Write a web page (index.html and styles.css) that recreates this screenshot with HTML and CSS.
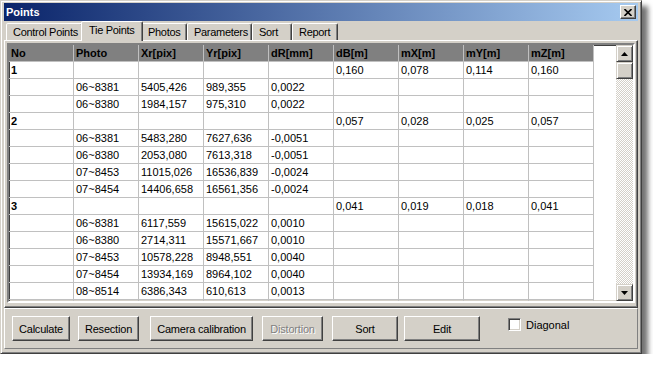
FILE: index.html
```html
<!DOCTYPE html>
<html>
<head>
<meta charset="utf-8">
<link rel="stylesheet" href="styles.css">
</head>
<body>
<div class="window">
  <div class="titlebar">
    <span class="title">Points</span>
    <div class="close"><svg width="8" height="7" viewBox="0 0 8 7"><path d="M0.5 0 L7.5 7 M7.5 0 L0.5 7" stroke="#000" stroke-width="1.6"/></svg></div>
  </div>
  <div class="tabs">
    <div class="tab w-cp">Control Points</div>
    <div class="tab active w-tp">Tie Points</div>
    <div class="tab w-ph">Photos</div>
    <div class="tab w-pa">Parameters</div>
    <div class="tab w-so">Sort</div>
    <div class="tab w-re">Report</div>
  </div>
  <div class="panel">
    <div class="listbox">
      <div class="grid">
        <div class="row head"><div class="cell">No</div><div class="cell">Photo</div><div class="cell">Xr[pix]</div><div class="cell">Yr[pix]</div><div class="cell">dR[mm]</div><div class="cell">dB[m]</div><div class="cell">mX[m]</div><div class="cell">mY[m]</div><div class="cell">mZ[m]</div></div>
        <div class="row"><div class="cell b">1</div><div class="cell"></div><div class="cell"></div><div class="cell"></div><div class="cell"></div><div class="cell">0,160</div><div class="cell">0,078</div><div class="cell">0,114</div><div class="cell">0,160</div></div>
        <div class="row"><div class="cell"></div><div class="cell">06~8381</div><div class="cell">5405,426</div><div class="cell">989,355</div><div class="cell">0,0022</div><div class="cell"></div><div class="cell"></div><div class="cell"></div><div class="cell"></div></div>
        <div class="row"><div class="cell"></div><div class="cell">06~8380</div><div class="cell">1984,157</div><div class="cell">975,310</div><div class="cell">0,0022</div><div class="cell"></div><div class="cell"></div><div class="cell"></div><div class="cell"></div></div>
        <div class="row"><div class="cell b">2</div><div class="cell"></div><div class="cell"></div><div class="cell"></div><div class="cell"></div><div class="cell">0,057</div><div class="cell">0,028</div><div class="cell">0,025</div><div class="cell">0,057</div></div>
        <div class="row"><div class="cell"></div><div class="cell">06~8381</div><div class="cell">5483,280</div><div class="cell">7627,636</div><div class="cell">-0,0051</div><div class="cell"></div><div class="cell"></div><div class="cell"></div><div class="cell"></div></div>
        <div class="row"><div class="cell"></div><div class="cell">06~8380</div><div class="cell">2053,080</div><div class="cell">7613,318</div><div class="cell">-0,0051</div><div class="cell"></div><div class="cell"></div><div class="cell"></div><div class="cell"></div></div>
        <div class="row"><div class="cell"></div><div class="cell">07~8453</div><div class="cell">11015,026</div><div class="cell">16536,839</div><div class="cell">-0,0024</div><div class="cell"></div><div class="cell"></div><div class="cell"></div><div class="cell"></div></div>
        <div class="row"><div class="cell"></div><div class="cell">07~8454</div><div class="cell">14406,658</div><div class="cell">16561,356</div><div class="cell">-0,0024</div><div class="cell"></div><div class="cell"></div><div class="cell"></div><div class="cell"></div></div>
        <div class="row"><div class="cell b">3</div><div class="cell"></div><div class="cell"></div><div class="cell"></div><div class="cell"></div><div class="cell">0,041</div><div class="cell">0,019</div><div class="cell">0,018</div><div class="cell">0,041</div></div>
        <div class="row"><div class="cell"></div><div class="cell">06~8381</div><div class="cell">6117,559</div><div class="cell">15615,022</div><div class="cell">0,0010</div><div class="cell"></div><div class="cell"></div><div class="cell"></div><div class="cell"></div></div>
        <div class="row"><div class="cell"></div><div class="cell">06~8380</div><div class="cell">2714,311</div><div class="cell">15571,667</div><div class="cell">0,0010</div><div class="cell"></div><div class="cell"></div><div class="cell"></div><div class="cell"></div></div>
        <div class="row"><div class="cell"></div><div class="cell">07~8453</div><div class="cell">10578,228</div><div class="cell">8948,551</div><div class="cell">0,0040</div><div class="cell"></div><div class="cell"></div><div class="cell"></div><div class="cell"></div></div>
        <div class="row"><div class="cell"></div><div class="cell">07~8454</div><div class="cell">13934,169</div><div class="cell">8964,102</div><div class="cell">0,0040</div><div class="cell"></div><div class="cell"></div><div class="cell"></div><div class="cell"></div></div>
        <div class="row"><div class="cell"></div><div class="cell">08~8514</div><div class="cell">6386,343</div><div class="cell">610,613</div><div class="cell">0,0013</div><div class="cell"></div><div class="cell"></div><div class="cell"></div><div class="cell"></div></div>
        <div class="row"><div class="cell"></div><div class="cell"></div><div class="cell"></div><div class="cell"></div><div class="cell"></div><div class="cell"></div><div class="cell"></div><div class="cell"></div><div class="cell"></div></div>
      </div>
      <div class="scrollbar">
        <div class="sbtn"><svg width="7" height="4" viewBox="0 0 7 4"><path d="M3.5 0 L7 4 L0 4 Z" fill="#000"/></svg></div>
        <div class="thumb"></div>
        <div class="track"></div>
        <div class="sbtn"><svg width="7" height="4" viewBox="0 0 7 4"><path d="M0 0 L7 0 L3.5 4 Z" fill="#000"/></svg></div>
      </div>
    </div>
  </div>
  <div class="bottom">
    <div class="btn w-calc">Calculate</div>
    <div class="btn w-res">Resection</div>
    <div class="btn w-cam">Camera calibration</div>
    <div class="btn w-dis disabled">Distortion</div>
    <div class="btn w-sort">Sort</div>
    <div class="btn w-edit">Edit</div>
    <div class="check"><span class="box"></span><span class="label">Diagonal</span></div>
  </div>
</div>
</body>
</html>
```

FILE: styles.css
```css
* { box-sizing: border-box; }
body {
  margin: 0;
  background: #fff;
  font-family: "Liberation Sans", Arial, sans-serif;
  font-size: 11px;
  color: #000;
}
.window {
  width: 642px;
  height: 354px;
  background: #d4d0c8;
  border: 1px solid;
  border-color: #d4d0c8 #404040 #404040 #d4d0c8;
  box-shadow: inset 1px 1px #fff, inset -1px -1px #808080, 6px 6px 5px rgba(0,0,0,0.55);
  padding: 2px 3px 3px 3px;
  display: flex;
  flex-direction: column;
}
.titlebar {
  height: 18px;
  flex: none;
  background: linear-gradient(to right, #0a246a, #a6caf0);
  display: flex;
  align-items: center;
  justify-content: space-between;
  padding: 0 2px;
  color: #fff;
  font-weight: bold;
}
.close {
  width: 16px;
  height: 14px;
  background: #d4d0c8;
  border: 1px solid;
  border-color: #fff #404040 #404040 #fff;
  box-shadow: inset -1px -1px #808080;
  display: flex;
  align-items: center;
  justify-content: center;
}
.tabs {
  height: 19px;
  flex: none;
  display: flex;
  align-items: flex-end;
  padding-left: 2px;
  position: relative;
  z-index: 1;
  letter-spacing: -0.3px;
}
.tab {
  height: 17px;
  border: 1px solid;
  border-bottom: none;
  border-color: #fff #404040 transparent #fff;
  box-shadow: inset -1px 0 #808080;
  border-radius: 2px 2px 0 0;
  padding: 2px 0 0 6px;
  line-height: 13px;
  background: #d4d0c8;
  white-space: nowrap;
}
.tab.active {
  height: 20px;
  margin: 0 -2px -1px;
  padding-left: 7px;
  position: relative;
  z-index: 2;
}
.w-cp { width: 77px; }
.w-tp { width: 62px; }
.w-ph { width: 46px; }
.w-pa { width: 65px; }
.w-so { width: 40px; }
.w-re { width: 46px; }
.panel {
  height: 268px;
  flex: none;
  border: 1px solid;
  border-color: #fff #404040 #404040 #fff;
  box-shadow: inset -1px -1px #808080;
  padding: 2px 2px 4px 2px;
}
.listbox {
  height: 100%;
  border: 2px solid;
  border-color: #808080 #fff #fff #808080;
  box-shadow: inset 1px 1px #404040, inset -1px -1px #d4d0c8;
  background: #fff;
  display: flex;
  overflow: hidden;
}
.grid {
  flex: 1;
  overflow: hidden;
}
.row {
  display: flex;
  height: 17px;
}
.cell {
  width: 65px;
  flex: none;
  height: 17px;
  border-right: 1px solid #c0c0c0;
  border-bottom: 1px solid #c0c0c0;
  padding-left: 2px;
  line-height: 16px;
  white-space: nowrap;
  overflow: hidden;
}
.head .cell {
  background: #808080;
  font-weight: bold;
}
.cell.b { font-weight: bold; }
.scrollbar {
  width: 17px;
  flex: none;
  display: flex;
  flex-direction: column;
}
.sbtn, .thumb {
  height: 17px;
  flex: none;
  background: #d4d0c8;
  border: 1px solid;
  border-color: #d4d0c8 #404040 #404040 #d4d0c8;
  box-shadow: inset 1px 1px #fff, inset -1px -1px #808080;
  display: flex;
  align-items: center;
  justify-content: center;
}
.track {
  flex: 1;
  background: repeating-conic-gradient(#fff 0 25%, #d4d0c8 0 50%) 0 0 / 2px 2px;
}
.bottom {
  height: 41px;
  flex: none;
  display: flex;
  align-items: flex-start;
  padding-top: 7px;
  border: 1px solid;
  border-color: #fff #808080 #808080 #fff;
}
.btn {
  height: 25px;
  background: #d4d0c8;
  border: 1px solid;
  border-color: #fff #404040 #404040 #fff;
  box-shadow: inset -1px -1px #808080;
  display: flex;
  align-items: center;
  justify-content: center;
  letter-spacing: -0.2px;
  white-space: nowrap;
}
.btn.disabled {
  color: #808080;
  text-shadow: 1px 1px #fff;
}
.w-calc { width: 58px; margin-left: 7px; }
.w-res { width: 61px; margin-left: 8px; }
.w-cam { width: 103px; margin-left: 11px; }
.w-dis { width: 61px; margin-left: 9px; }
.w-sort { width: 66px; margin-left: 9px; }
.w-edit { width: 76px; margin-left: 6px; }
.check {
  display: flex;
  align-items: center;
  margin-left: 28px;
  margin-top: 2px;
  height: 13px;
}
.box {
  width: 13px;
  height: 13px;
  background: #fff;
  border: 1px solid;
  border-color: #808080 #fff #fff #808080;
  box-shadow: inset 1px 1px #404040, inset -1px -1px #d4d0c8;
}
.label {
  margin-left: 5px;
}
```
